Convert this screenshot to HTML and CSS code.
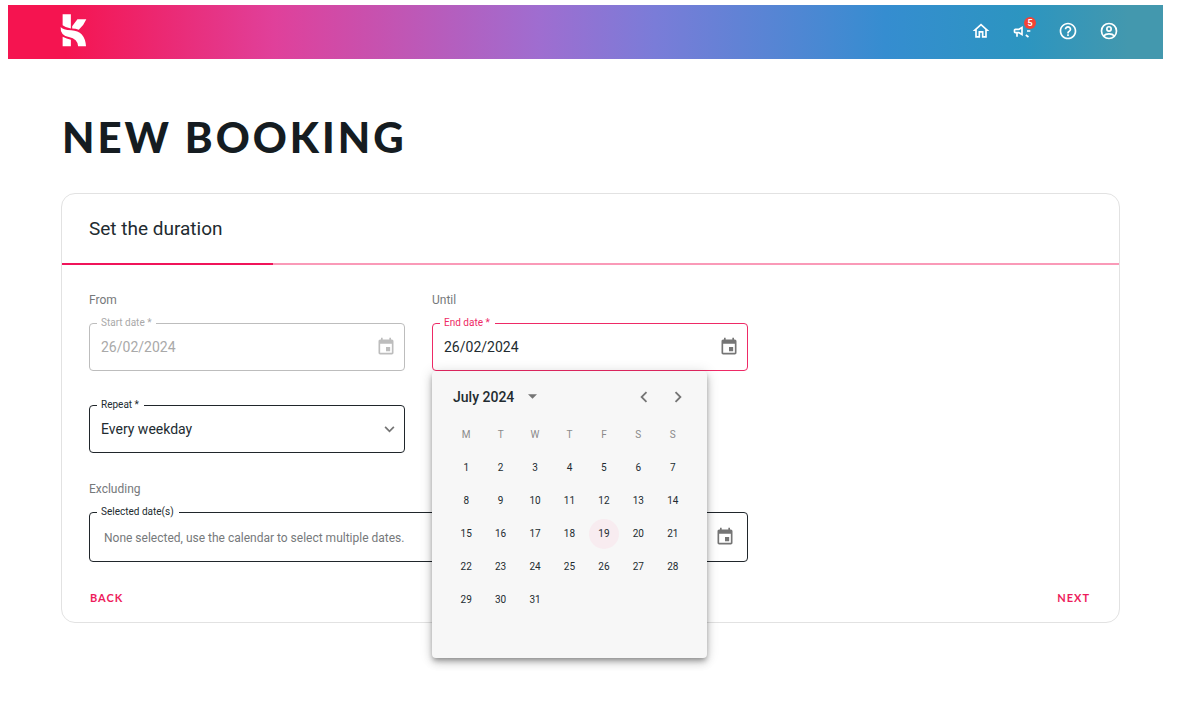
FILE: index.html
```
<!DOCTYPE html>
<html lang="en">
<head>
<meta charset="utf-8">
<title>New booking</title>
<link rel="stylesheet" href="styles.css">
</head>
<body>
<svg class="sprite" width="0" height="0" aria-hidden="true">
  <symbol id="icon-event" viewBox="0 0 24 24">
    <path d="M17 12h-5v5h5v-5zM16 1v2H8V1H6v2H5c-1.110 0-1.990.9-1.990 2L3 19c0 1.100.89 2 2 2h14c1.100 0 2-.9 2-2V5c0-1.100-.9-2-2-2h-1V1h-2zm3 18H5V8h14v11z"/>
  </symbol>
</svg>

<header class="topbar">
  <a class="logo" href="#" aria-label="Home page">
    <svg width="27" height="33" viewBox="0 0 82 100">
      <path d="M8 1H33V44Q18 42 8 34ZM53 16H80Q72 35 57 48Q47 44 37 44V37ZM2 39Q8 48 34 49Q76 51 79 98H55Q54 76 27 70Q0 64 2 39ZM8 69Q20 75 33 78V98H8Z"/>
    </svg>
  </a>
  <nav class="actions">
    <a class="action" href="#" aria-label="Home">
      <svg viewBox="0 0 24 24"><path d="M12 3L2 12h3v8h6v-6h2v6h6v-8h3L12 3zm5 15h-2v-6H9v6H7v-7.810l5-4.500 5 4.500V18z"/></svg>
    </a>
    <a class="action action-news" href="#" aria-label="News">
      <svg viewBox="0 0 24 24"><path d="M18 11v2h4v-2h-4zm-2 6.610c.96.710 2.210 1.650 3.200 2.390.4-.53.8-1.070 1.200-1.600-.99-.74-2.240-1.680-3.200-2.400-.4.540-.8 1.080-1.200 1.610zM4 9c-1.100 0-2 .9-2 2v2c0 1.100.9 2 2 2h1v4h2v-4h1l5 3V6L8 9H4zm5.030 1.710L11 9.530v4.940l-1.970-1.180-.48-.29H4v-2h4.550l.48-.29z"/></svg>
      <span class="badge">5</span>
    </a>
    <a class="action" href="#" aria-label="Help">
      <svg viewBox="0 0 24 24"><path d="M11 18h2v-2h-2v2zm1-16C6.480 2 2 6.480 2 12s4.480 10 10 10 10-4.480 10-10S17.520 2 12 2zm0 18c-4.410 0-8-3.590-8-8s3.590-8 8-8 8 3.590 8 8-3.590 8-8 8zm0-14c-2.210 0-4 1.790-4 4h2c0-1.100.9-2 2-2s2 .9 2 2c0 2-3 1.750-3 5h2c0-2.250 3-2.500 3-5 0-2.210-1.790-4-4-4z"/></svg>
    </a>
    <a class="action" href="#" aria-label="Account">
      <svg viewBox="0 0 24 24"><g fill="none" stroke="currentColor" stroke-width="2"><circle cx="12" cy="12" r="9"/><circle cx="12" cy="9.500" r="2.600"/><path d="M5.500 18c3-3.500 10-3.500 13 0"/></g></svg>
    </a>
  </nav>
</header>

<main class="page">
  <h1 class="title">NEW BOOKING</h1>

  <form class="card">
    <h2 class="card-title">Set the duration</h2>
    <div class="progress"><div class="progress-value" style="width: 20%"></div></div>

    <div class="card-body">
      <div class="grid">
        <div class="group">
          <p class="hint">From</p>
          <div class="field field-disabled">
            <label class="field-label" for="start">Start date *</label>
            <input class="field-input" type="text" id="start" value="26/02/2024" disabled>
            <button class="icon-button" type="button" aria-label="Open calendar" disabled><svg width="20" height="20"><use href="#icon-event"/></svg></button>
          </div>
        </div>

        <div class="group">
          <p class="hint">Until</p>
          <div class="field field-error">
            <label class="field-label" for="end">End date *</label>
            <input class="field-input" type="text" id="end" value="26/02/2024">
            <button class="icon-button" type="button" aria-label="Open calendar"><svg width="20" height="20"><use href="#icon-event"/></svg></button>

            <div class="calendar">
              <div class="calendar-header">
                <button class="calendar-period" type="button">July 2024
                  <svg width="9" height="5" viewBox="0 0 10 5"><path d="M0 0h10L5 5z"/></svg>
                </button>
                <button class="calendar-nav" type="button" aria-label="Previous month"><svg width="22" height="22" viewBox="0 0 24 24"><path d="M15.410 7.410L14 6l-6 6 6 6 1.410-1.410L10.830 12z"/></svg></button>
                <button class="calendar-nav" type="button" aria-label="Next month"><svg width="22" height="22" viewBox="0 0 24 24"><path d="M10 6L8.590 7.410 13.170 12l-4.580 4.590L10 18l6-6z"/></svg></button>
              </div>
              <table class="calendar-table">
                <thead>
                  <tr><th>M</th><th>T</th><th>W</th><th>T</th><th>F</th><th>S</th><th>S</th></tr>
                </thead>
                <tbody id="days"></tbody>
              </table>
            </div>
          </div>
        </div>

        <div class="group group-repeat">
          <div class="field field-select">
            <label class="field-label" for="repeat">Repeat *</label>
            <select class="field-input" id="repeat">
              <option>Every weekday</option>
            </select>
            <svg class="chevron" width="11" height="7" viewBox="0 0 12 8"><path d="M1 1l5 5 5-5"/></svg>
          </div>
        </div>
      </div>

      <div class="grid">
        <div class="group group-wide">
          <p class="hint">Excluding</p>
          <div class="field field-dates">
            <label class="field-label" for="excluded">Selected date(s)</label>
            <input class="field-input" type="text" id="excluded" placeholder="None selected, use the calendar to select multiple dates." readonly>
            <button class="icon-button" type="button" aria-label="Open calendar"><svg width="20" height="20"><use href="#icon-event"/></svg></button>
          </div>
        </div>
      </div>

      <div class="buttons">
        <button class="text-button" type="button">BACK</button>
        <button class="text-button" type="submit">NEXT</button>
      </div>
    </div>
  </form>
</main>
<script src="script.js"></script>
</body>
</html>
```
FILE: styles.css
```
* {
  box-sizing: border-box;
}

body {
  min-height: 100vh;
  margin: 0;
  padding: 5px 18px 0 8px;
  font-family: Roboto, "Liberation Sans", sans-serif;
  color: #222b30;
  background-color: #fff;
}

button, input, select {
  font-family: inherit;
  color: inherit;
}

button {
  border: none;
  padding: 0;
  background: none;
  cursor: pointer;
}

svg {
  display: block;
  fill: currentColor;
}

.sprite {
  position: absolute;
}

.topbar {
  display: flex;
  justify-content: space-between;
  align-items: center;
  height: 54px;
  padding: 0 44px 3px 52px;
  color: #fff;
  background: linear-gradient(90deg, #f51450 0%, #f51450 5%, #e0409a 23%, #9f6dd0 46%, #7a7cd8 56%, #358dd0 76%, #2c95c0 88%, #4398ae 97%);
}

.logo {
  color: inherit;
}

.actions {
  display: flex;
  gap: 21px;
}

.action {
  position: relative;
  color: inherit;
}

.action svg {
  width: 20px;
  height: 20px;
}

.action-news {
  margin-right: 5px;
}

.badge {
  position: absolute;
  top: -4px;
  right: -4px;
  width: 12px;
  height: 12px;
  border-radius: 50%;
  background-color: #f44336;
  font-size: 9px;
  font-weight: bold;
  line-height: 12px;
  text-align: center;
}

.page {
  padding: 53px 43px 0 53px;
}

.title {
  margin: 0 0 31px 1px;
  font-family: Lato, sans-serif;
  font-size: 42px;
  font-weight: 900;
  line-height: 50px;
  letter-spacing: 3px;
  color: #151c21;
}

.card {
  border: 1px solid #e2e2e2;
  border-radius: 14px;
}

.card-title {
  margin: 0;
  padding: 0 27px;
  font-size: 19px;
  font-weight: normal;
  line-height: 69px;
}

.progress {
  height: 2px;
  background-color: #fa9ab8;
}

.progress-value {
  height: 2px;
  background-color: #f0145a;
}

.card-body {
  padding: 27px 28px 16px 27px;
}

.grid {
  display: grid;
  grid-template-columns: repeat(3, 1fr);
  column-gap: 27px;
  margin-bottom: 28px;
}

.group-repeat {
  grid-column: 1;
  margin-top: 34px;
}

.group-wide {
  grid-column: span 2;
}

.hint {
  margin: 0 0 15px;
  font-size: 12px;
  line-height: 16px;
  color: #76797b;
}

.field {
  position: relative;
  display: flex;
  align-items: center;
  height: 48px;
  border: 1px solid #20262b;
  border-radius: 4px;
}

.field-label {
  position: absolute;
  top: -8px;
  left: 7px;
  padding: 0 5px 0 4px;
  font-size: 10px;
  line-height: 14px;
  background-color: #fff;
}

.field-input {
  flex: 1;
  min-width: 0;
  height: 100%;
  border: none;
  padding: 0 11px;
  font-size: 14px;
  background: none;
  appearance: none;
  outline: none;
}

.field-input::placeholder {
  font-size: 12px;
  color: #76797b;
  opacity: 1;
}

.icon-button {
  margin-right: 8px;
  color: #757575;
}

.field-disabled {
  border-color: #bdbdbd;
  color: #a9a9a9;
}

.field-disabled .icon-button {
  color: #bdbdbd;
}

.field-error {
  border-color: #ee2a66;
}

.field-error .field-label {
  color: #ee2a66;
}

.field-dates {
  height: 50px;
}

.field-dates .field-input {
  padding-left: 14px;
}

.field-dates .icon-button {
  margin-right: 12px;
}

.chevron {
  position: absolute;
  right: 9px;
  fill: none;
  stroke: #757575;
  stroke-width: 2px;
  pointer-events: none;
}

/* date picker popup */
.calendar {
  position: absolute;
  top: 100%;
  left: -1px;
  z-index: 1;
  width: 275px;
  margin-top: 1px;
  padding: 4px 17px 9px;
  border-radius: 4px;
  background-color: #f7f7f7;
  box-shadow: 0 3px 5px -1px rgba(0, 0, 0, 0.3), 0 5px 8px rgba(0, 0, 0, 0.16), 0 1px 14px rgba(0, 0, 0, 0.14);
}

.calendar-header {
  display: flex;
  align-items: center;
  height: 43px;
  margin-right: -5px;
}

.calendar-period {
  display: flex;
  align-items: center;
  gap: 14px;
  margin-right: auto;
  padding-left: 4px;
  font-size: 14px;
  font-weight: 500;
}

.calendar-period svg {
  color: #757575;
}

.calendar-nav {
  display: flex;
  justify-content: center;
  width: 34px;
  color: #757575;
}

.calendar-table {
  width: 100%;
  border-collapse: collapse;
  table-layout: fixed;
}

.calendar-table th,
.calendar-table td {
  height: 33px;
  padding: 0;
  font-size: 10px;
  font-weight: normal;
  text-align: center;
}

.calendar-table th {
  color: #8a8a8a;
}

.day {
  width: 30px;
  height: 30px;
  border-radius: 50%;
  font-size: 10px;
}

.day-active {
  background-color: #f8ecf0;
}

.buttons {
  display: flex;
  justify-content: space-between;
}

.text-button {
  padding: 0 1px;
  font-family: Lato, sans-serif;
  font-size: 11px;
  font-weight: bold;
  line-height: 16px;
  letter-spacing: 1px;
  color: #ee1c5c;
}
```
FILE: script.js
```
var days = document.getElementById("days");
var daysInMonth = 31;
var activeDay = 19;

// July 2024 starts on a Monday, the picker always shows six weeks
for (var week = 0; week < 6; week++) {
  var row = days.insertRow();
  for (var i = 1; i <= 7; i++) {
    var cell = row.insertCell();
    var day = week * 7 + i;
    if (day > daysInMonth) {
      continue;
    }
    var button = document.createElement("button");
    button.type = "button";
    button.className = day == activeDay ? "day day-active" : "day";
    button.textContent = day;
    cell.appendChild(button);
  }
}
```
